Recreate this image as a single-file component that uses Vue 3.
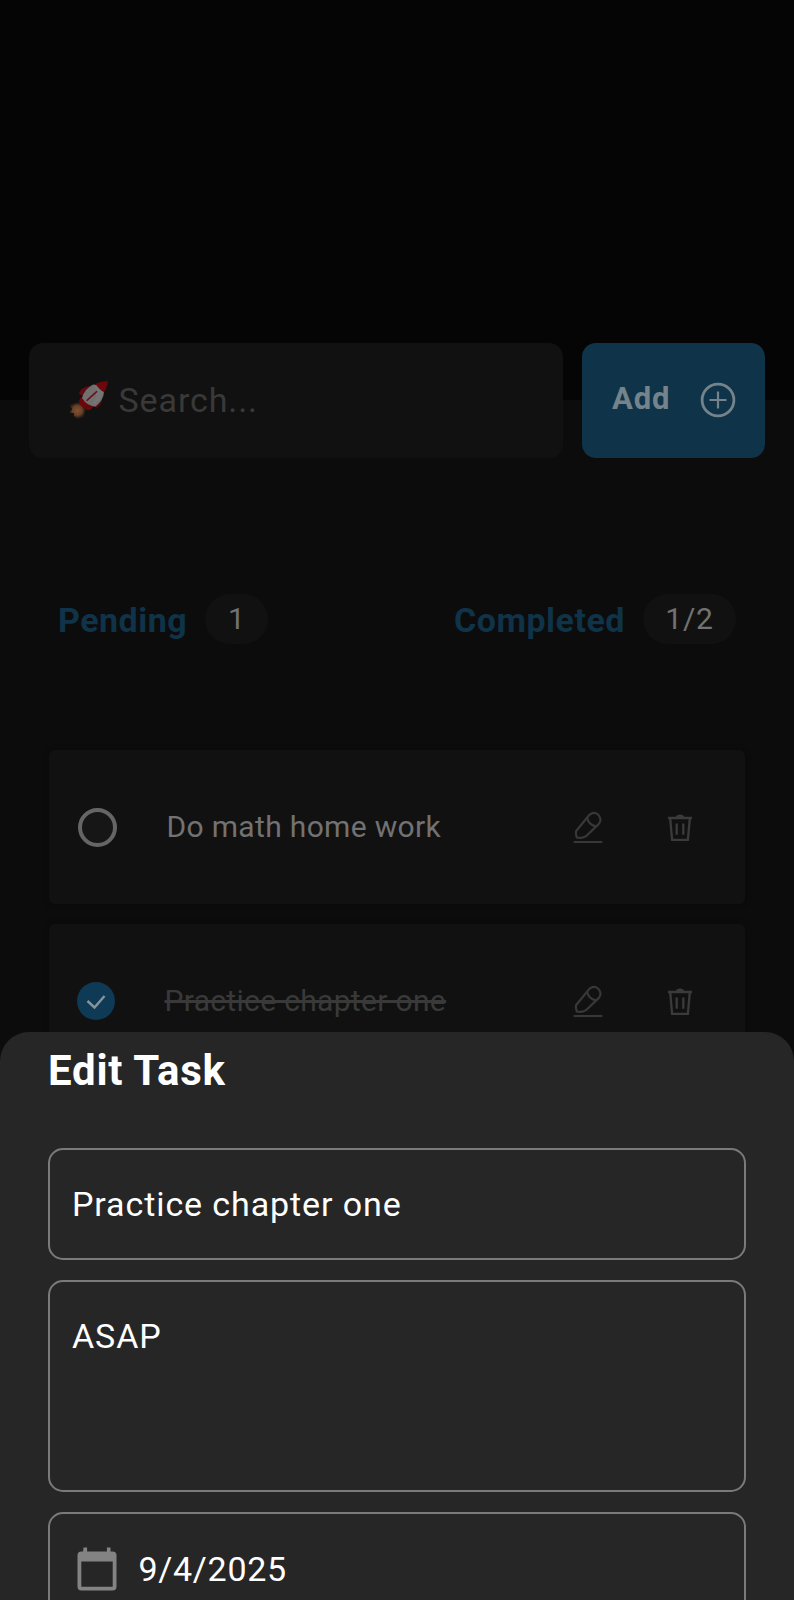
<script setup>
const tasks = [
  { title: 'Do math home work', done: false },
  { title: 'Practice chapter one', done: true },
]
</script>

<template>
  <main class="screen">
    <header class="top">
      <div class="search">
        <svg class="rocket" viewBox="30 30 120 120" aria-hidden="true">
          <defs>
            <radialGradient id="flame">
              <stop offset="0" stop-color="#83522f" />
              <stop offset="0.6" stop-color="#68402a" />
              <stop offset="1" stop-color="#3a241a" stop-opacity="0.4" />
            </radialGradient>
          </defs>
          <path d="M36 103 62 97 80 119 74 141 55 146 44 138 46 130 30 128 40 117 30 107Z" fill="url(#flame)" />
          <path d="M59 71Q66 52 92 47L72 79Z" fill="#620a0d" />
          <path d="M128 83Q132 101 113 115L103 104Z" fill="#570709" />
          <path d="M67 80 103 108Q98 123 83 120L62 103Q56 94 67 80Z" fill="#6b0709" />
          <path d="M101 44Q122 42 135 66Q134 91 109 110Q84 108 69 84Q76 57 101 44Z" fill="#707070" />
          <path d="M106 47Q124 48 132 66Q130 86 109 103L101 99Q119 80 106 47Z" fill="#7c7a7a" opacity=".5" />
          <path d="M109 41Q127 33 146 33Q147 49 135 66Q123 61 109 41Z" fill="#6c080b" />
          <path d="M84 91 113 65" stroke="#6b1016" stroke-width="4.5" stroke-linecap="round" />
        </svg>
        <span class="placeholder">Search...</span>
      </div>
      <button class="add">
        <span class="add-label">Add</span>
        <svg class="plus" viewBox="0 0 36 36" fill="none" stroke="#75838b">
          <circle cx="18" cy="18" r="15.9" stroke-width="2.8" />
          <path d="M18 9.5v17M9.5 18h17" stroke-width="2.2" />
        </svg>
      </button>
    </header>

    <section class="counts">
      <div class="count"><b class="pending">Pending</b><span class="badge one">1</span></div>
      <div class="count"><b class="completed">Completed</b><span class="badge two">1/2</span></div>
    </section>

    <section class="list">
      <article v-for="task in tasks" :key="task.title" class="task" :class="{ done: task.done }">
        <span class="mark">
          <svg v-if="task.done" viewBox="0 0 38 38" fill="none">
            <path d="m10.5 19 7 6.5 10-11.5" stroke="#87949b" stroke-width="2.4" />
          </svg>
        </span>
        <span class="name">{{ task.title }}</span>
        <svg class="edit" viewBox="0 0 32 36" fill="none" stroke="#383838" stroke-width="2.2" stroke-linejoin="round" stroke-linecap="round">
          <path d="M4 22.3 15.4 8.3C18 3.8 22.4 2.6 26 5.5 29.4 8.6 29.2 12.4 26.4 15.4L14 27.2Q10 29.8 4.8 28.5Q3.4 25.5 4 22.3Z" />
          <path d="M15.3 9.5Q17 15.6 23.6 17.4M2.5 33h27" />
        </svg>
        <svg class="trash" viewBox="0 0 28 32" fill="none" stroke="#3b3b3b" stroke-width="2.3">
          <path d="M2 7h24M4.2 7.3l1.9 21.5h15.8l1.9-21.5M10.7 12.5v11.3M17.3 12.5v11.3" />
          <path d="M9.5 6.4q1-3 4.5-3t4.5 3z" fill="#3b3b3b" stroke="none" />
        </svg>
      </article>
    </section>

    <section class="sheet">
      <h1 class="title">Edit Task</h1>
      <div class="field single"><span class="value practice">Practice chapter one</span></div>
      <div class="field area"><span class="value asap">ASAP</span></div>
      <div class="field date">
        <svg class="calendar" viewBox="0 0 40 44" fill="#838383">
          <path fill-rule="evenodd" d="M6.5.5h3.6v4h19.8v-4h3.6v4h2q4 0 4 4v31q0 4-4 4h-31q-4 0-4-4v-31q0-4 4-4h1.6zM4.3 14.5v25.3h31.4V14.5z" />
        </svg>
        <span class="value day">9/4/2025</span>
      </div>
    </section>
  </main>
</template>

<style>
body {
  background: #0c0c0c;
}
</style>

<style scoped>
* {
  box-sizing: border-box;
}
.screen {
  width: 794px;
  height: 1600px;
  overflow: hidden;
  display: grid;
  grid-template-columns: 794px;
  grid-template-rows: 594px 156px 281.5px 568.5px;
  background: linear-gradient(#050505 0 400px, #0c0c0c 400px);
  font-family: Roboto, "Liberation Sans", sans-serif;
  color: #727272;
}
.top {
  display: flex;
  align-items: flex-start;
  gap: 19px;
  padding: 342.5px 29px 0;
}
.search {
  width: 534px;
  height: 115.5px;
  padding-left: 40px;
  border-radius: 14px;
  background: #111;
  display: flex;
  align-items: center;
}
.rocket {
  width: 40px;
  height: 40px;
  flex: none;
}
.placeholder {
  margin: -1px 0 0 9.5px;
  font-size: 34px;
  line-height: 40px;
  letter-spacing: 0.9px;
  color: #393939;
}
.add {
  width: 183px;
  height: 115.5px;
  padding: 0 29px 0 30px;
  border: 0;
  border-radius: 14px;
  background: #0f3348;
  color: #75838b;
  font-family: inherit;
  display: flex;
  align-items: center;
  justify-content: space-between;
}
.add-label {
  font-size: 31px;
  line-height: 40px;
  font-weight: 700;
  letter-spacing: 0.9px;
  margin-top: -2px;
}
.plus {
  width: 36px;
  height: 36px;
}
.counts {
  display: flex;
  justify-content: space-between;
  align-items: flex-start;
  padding: 0 58px;
}
.count {
  display: flex;
  align-items: center;
  height: 50px;
}
.count b {
  font-size: 34px;
  line-height: 40px;
  color: #0f3348;
  letter-spacing: 0.5px;
  padding-top: 2px;
}
.badge {
  margin-left: 18px;
  height: 50px;
  border-radius: 25px;
  background: #111;
  font-size: 30px;
  line-height: 50px;
  text-align: center;
  letter-spacing: 0.8px;
}
.one {
  width: 63px;
}
.two {
  width: 93px;
}
.list {
  display: flex;
  flex-direction: column;
  gap: 20px;
  padding: 0 49px;
}
.task {
  height: 154px;
  flex: none;
  display: flex;
  align-items: center;
  padding: 0 51px 0 29px;
  border-radius: 6px;
  background: #111;
  box-shadow: 0 0 6px rgba(0, 0, 0, 0.3);
}
.mark {
  width: 39px;
  height: 39px;
  flex: none;
  border: 4px solid #656565;
  border-radius: 50%;
  background: #161616;
  display: block;
}
.done .mark {
  width: 38px;
  height: 38px;
  margin-left: -1px;
  border: 0;
  background: #0f3a55;
}
.mark svg {
  display: block;
}
.name {
  margin-left: 49.5px;
  flex: 1;
  font-size: 30px;
  line-height: 40px;
  letter-spacing: 0.33px;
  white-space: nowrap;
}
.done .name {
  color: #393939;
  text-decoration: line-through;
  text-decoration-thickness: 2.5px;
}
.edit {
  width: 32px;
  height: 36px;
}
.trash {
  width: 28px;
  height: 32px;
  margin-left: 62.5px;
}
.sheet {
  position: relative;
  border-radius: 29px 29px 0 0;
  background: #262626;
  padding: 14px 48px 0;
  display: flex;
  flex-direction: column;
  color: #fff;
}
.title {
  margin: 0 0 52.5px;
  font-size: 42px;
  line-height: 50px;
  font-weight: 700;
  letter-spacing: 0.75px;
}
.field {
  flex: none;
  border: 2px solid #7a7a7a;
  border-radius: 15px;
  padding: 0 22px;
  display: flex;
  align-items: center;
  margin-bottom: 20px;
}
.single {
  height: 112px;
}
.area {
  height: 212px;
  align-items: flex-start;
  padding-top: 34px;
}
.date {
  height: 113px;
  padding-left: 26.5px;
}
.value {
  font-size: 34px;
  line-height: 40px;
  letter-spacing: 0.9px;
}
.day {
  letter-spacing: 0.7px;
  padding-top: 1px;
}
.calendar {
  width: 40px;
  height: 44px;
  margin-right: 22px;
}
</style>
